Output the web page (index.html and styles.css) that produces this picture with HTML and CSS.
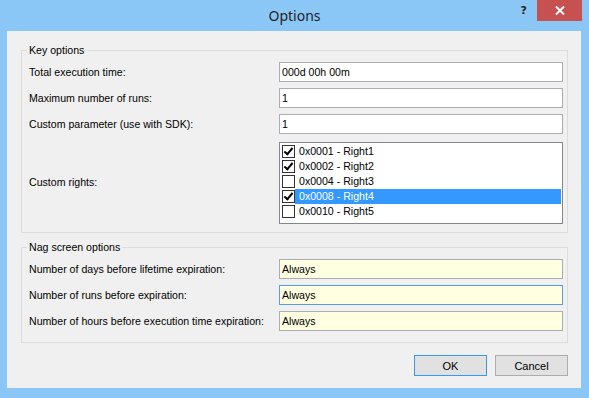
FILE: index.html
```html
<!DOCTYPE html>
<html lang="en">
<head>
    <meta charset="UTF-8">
    <title>Options</title>
    <link rel="stylesheet" href="styles.css">
</head>
<body>
    <div class="window">
        <div class="titlebar">
            <span class="title">Options</span>
            <div class="caption-buttons">
                <span class="help">?</span>
                <span class="close">
                    <svg width="10" height="9" viewBox="0 0 10 9">
                        <path d="M1 0.5 L9 8.5 M9 0.5 L1 8.5" stroke="#fff" stroke-width="2"/>
                    </svg>
                </span>
            </div>
        </div>

        <div class="client">
            <fieldset class="group key">
                <legend>Key options</legend>
                <div class="rows">
                    <label>Total execution time:</label>
                    <input class="field" type="text" value="000d 00h 00m">

                    <label>Maximum number of runs:</label>
                    <input class="field" type="text" value="1">

                    <label>Custom parameter (use with SDK):</label>
                    <input class="field" type="text" value="1">

                    <label class="rights-label">Custom rights:</label>
                    <div class="listbox">
                        <div class="item"><span class="check on"></span><span class="text">0x0001 - Right1</span></div>
                        <div class="item"><span class="check on"></span><span class="text">0x0002 - Right2</span></div>
                        <div class="item"><span class="check"></span><span class="text">0x0004 - Right3</span></div>
                        <div class="item selected"><span class="check on"></span><span class="text">0x0008 - Right4</span></div>
                        <div class="item"><span class="check"></span><span class="text">0x0010 - Right5</span></div>
                    </div>
                </div>
            </fieldset>

            <fieldset class="group nag">
                <legend>Nag screen options</legend>
                <div class="rows">
                    <label>Number of days before lifetime expiration:</label>
                    <input class="field info" type="text" value="Always">

                    <label>Number of runs before expiration:</label>
                    <input class="field info focused" type="text" value="Always">

                    <label>Number of hours before execution time expiration:</label>
                    <input class="field info" type="text" value="Always">
                </div>
            </fieldset>

            <div class="buttons">
                <button class="btn default">OK</button>
                <button class="btn">Cancel</button>
            </div>
        </div>
    </div>
</body>
</html>
```

FILE: styles.css
```css
body {
    margin: 0;
    padding: 0;
    font-family: 'Liberation Sans', Arial, sans-serif;
    font-size: 10.6px;
    color: #000000;
    background: #8bc7f6;
}
.window {
    width: 589px;
    height: 398px;
    background: #8bc7f6;
    box-sizing: border-box;
    padding: 0 8px 10px 7px;
}
.titlebar {
    display: grid;
    grid-template-columns: 1fr auto 1fr;
    height: 31px;
    margin: 0 -8px 0 -7px;
}
.title {
    grid-column: 2;
    font-family: 'Noto Sans', 'Open Sans', sans-serif;
    font-size: 14px;
    color: #1e1e1e;
    padding-top: 6px;
}
.caption-buttons {
    grid-column: 3;
    justify-self: end;
    display: flex;
    align-items: flex-start;
    margin-right: 7px;
}
.help {
    font-family: 'DejaVu Sans', sans-serif;
    font-weight: bold;
    font-size: 11px;
    color: #222;
    margin: 4px 10px 0 0;
}
.close {
    width: 45px;
    height: 21px;
    background: #c75050;
    display: flex;
    align-items: center;
    justify-content: center;
}
.client {
    background: #f0f0f0;
    height: 357px;
    box-sizing: border-box;
    padding: 13px 13px 0 14px;
    display: flex;
    flex-direction: column;
}
.group {
    margin: 0;
    border: 1px solid #dcdcdc;
    padding: 5px 4px 8px 7px;
}
.group legend {
    padding: 0 2px;
    margin-left: -2px;
    line-height: 13px;
}
.nag {
    margin-top: 8px;
    padding-bottom: 11px;
}
.rows {
    display: grid;
    grid-template-columns: 1fr 284px;
    row-gap: 6px;
    align-items: center;
}
.field {
    height: 20px;
    box-sizing: border-box;
    border: 1px solid #abadb3;
    background: #ffffff;
    font-family: inherit;
    font-size: 10.6px;
    padding: 0 2px;
    margin: 0;
    outline: none;
}
.field.info {
    background: #ffffe1;
}
.field.focused {
    border-color: #569de5;
}
.listbox {
    margin-top: 2px;
    height: 82px;
    box-sizing: border-box;
    border: 1px solid #828790;
    background: #ffffff;
    padding-top: 1px;
}
.item {
    display: flex;
    align-items: center;
    height: 15px;
}
.check {
    width: 13px;
    height: 13px;
    box-sizing: border-box;
    border: 1px solid #333333;
    background: #ffffff;
    margin-left: 2px;
    position: relative;
}
.check.on::after {
    content: "";
    position: absolute;
    left: 3px;
    top: 0px;
    width: 3px;
    height: 7px;
    border: solid #000;
    border-width: 0 2px 2px 0;
    transform: rotate(40deg);
}
.text {
    flex: 1;
    height: 15px;
    line-height: 15px;
    padding-left: 4px;
    margin-right: 1px;
}
.selected .text {
    background: #3399ff;
    color: #ffffff;
}
.buttons {
    display: flex;
    justify-content: flex-end;
    gap: 8px;
    margin-top: 12px;
}
.btn {
    width: 73px;
    height: 21px;
    box-sizing: border-box;
    background: #e1e1e1;
    border: 1px solid #adadad;
    font-family: inherit;
    font-size: 11px;
    color: #000;
    padding: 0;
}
.btn.default {
    border-color: #3399ff;
}
```
